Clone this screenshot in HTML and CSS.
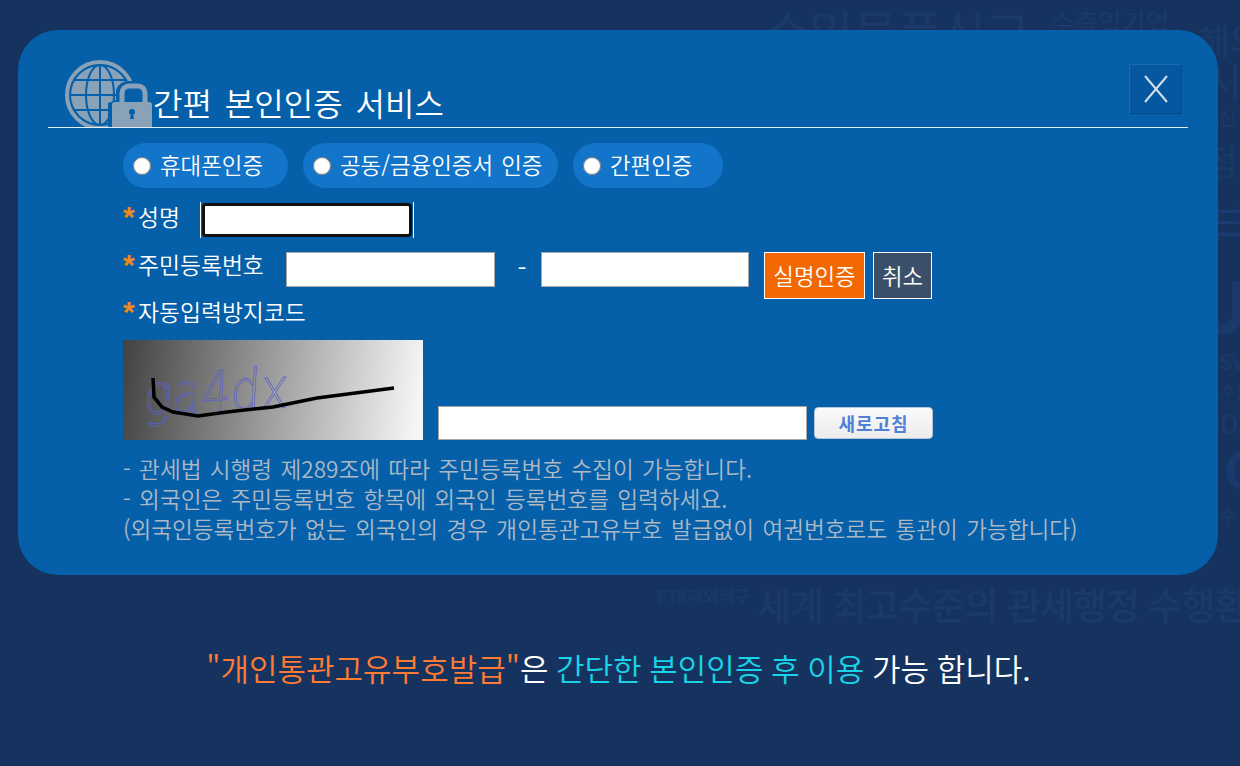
FILE: index.html
```html
<!DOCTYPE html>
<html lang="ko">
<head>
    <meta charset="UTF-8">
    <meta name="viewport" content="width=device-width, initial-scale=1.0">
    <title>간편 본인인증 서비스</title>
    <link rel="stylesheet" href="styles.css">
</head>
<body>
    <div class="ghost-layer" aria-hidden="true">
        <span class="ghost ghost-top">수입물품신고</span>
        <span class="ghost ghost-top-sm">수출입기업</span>
        <span class="ghost ghost-right1">해외</span>
        <span class="ghost ghost-right2">시</span>
        <span class="ghost ghost-right3">신</span>
        <span class="ghost ghost-right4">정</span>
        <span class="ghost ghost-right5">브</span>
        <span class="ghost ghost-right6">U</span>
        <span class="ghost ghost-right7">SV</span>
        <span class="ghost ghost-right8">수출</span>
        <span class="ghost ghost-right9">이</span>
        <span class="ghost ghost-right10">C</span>
        <span class="ghost ghost-right11">수</span>
        <span class="ghost ghost-fta">FTA해외직구</span>
        <span class="ghost ghost-world">세계 최고수준의 관세행정 수행환</span>
    </div>

    <div class="modal">
        <div class="modal-header">
            <svg class="header-icon" viewBox="0 0 89 67" width="89" height="67">
                <circle cx="36" cy="35" r="33" fill="none" stroke="#8aa2b8" stroke-width="4"/>
                <circle cx="36" cy="35" r="29" fill="#8aa2b8"/>
                <g fill="none" stroke="#0560a9" stroke-width="2">
                    <ellipse cx="36" cy="35" rx="14" ry="30"/>
                    <path d="M36 5V65M6 35H66M10 20H62M10 50H62"/>
                </g>
                <path d="M44 67V43l8-3V30a13 13 0 0 1 13-9h8a13 13 0 0 1 13 9v10l5 3v24z" fill="#0560a9"/>
                <path d="M58 43V33a7 7 0 0 1 7-7h9a7 7 0 0 1 7 7v10" fill="none" stroke="#8aa2b8" stroke-width="5"/>
                <path d="M48 45a3 3 0 0 1 3-3h34a3 3 0 0 1 3 3v22H48z" fill="#8aa2b8"/>
                <circle cx="68" cy="52" r="3" fill="#0560a9"/>
                <path d="M67 53h2l1 6h-4z" fill="#0560a9"/>
            </svg>
            <h1 class="modal-title">간편 본인인증 서비스</h1>
            <button class="close-btn" aria-label="닫기">
                <svg viewBox="0 0 24 28" width="24" height="28"><path d="M1 1L23 27M23 1L1 27" fill="none" stroke="#d5e0ea" stroke-width="2"/></svg>
            </button>
        </div>

        <div class="modal-body">
            <div class="auth-tabs">
                <label class="auth-tab tab-phone"><input type="radio" name="auth"> 휴대폰인증</label>
                <label class="auth-tab tab-cert"><input type="radio" name="auth"> 공동/금융인증서 인증</label>
                <label class="auth-tab tab-easy"><input type="radio" name="auth"> 간편인증</label>
            </div>

            <div class="form-row name-row">
                <div class="field-label"><span class="star">*</span>성명</div>
                <span class="name-wrap"><input class="text-input name-input" type="text"></span>
            </div>

            <div class="form-row rrn-row">
                <div class="field-label"><span class="star">*</span>주민등록번호</div>
                <input class="text-input rrn-input" type="text">
                <span class="rrn-dash">-</span>
                <input class="text-input rrn-input rrn-back" type="text">
                <button class="btn-confirm">실명인증</button>
                <button class="btn-cancel">취소</button>
            </div>

            <div class="field-label code-label"><span class="star">*</span>자동입력방지코드</div>

            <div class="captcha-row">
                <svg class="captcha" viewBox="0 0 300 100" width="300" height="100">
                    <defs>
                        <linearGradient id="captchaBg" gradientUnits="userSpaceOnUse" x1="0" y1="0" x2="300" y2="40">
                            <stop offset="0" stop-color="#424242"/>
                            <stop offset="1" stop-color="#f6f6f6"/>
                        </linearGradient>
                    </defs>
                    <rect width="300" height="100" fill="url(#captchaBg)"/>
                    <text class="captcha-text" transform="translate(20 75) rotate(-3) skewX(-6) scale(.84 1)">ga4dx</text>
                    <path d="M30 38L31 57L39 67L50 72L75 76L104 72L150 67L194 58L271 48" fill="none" stroke="#000" stroke-width="3.5"/>
                </svg>
                <input class="text-input captcha-input" type="text">
                <button class="btn-refresh">새로고침</button>
            </div>

            <div class="notes">
                <p>- 관세법 시행령 제289조에 따라 주민등록번호 수집이 가능합니다.</p>
                <p>- 외국인은 주민등록번호 항목에 외국인 등록번호를 입력하세요.</p>
                <p>(외국인등록번호가 없는 외국인의 경우 개인통관고유부호 발급없이 여권번호로도 통관이 가능합니다)</p>
            </div>
        </div>
    </div>

    <p class="bottom-msg"><span class="msg-orange">"개인통관고유부호발급"</span>은 <span class="msg-cyan">간단한 본인인증 후 이용</span> 가능 합니다.</p>
</body>
</html>
```

FILE: styles.css
```css
* {
    box-sizing: border-box;
}
html, body {
    height: 100%;
}
body {
    margin: 0;
    padding: 30px 22px 0 18px;
    background-color: #163360;
    color: white;
    font-family: "Noto Sans CJK KR", "Noto Sans", sans-serif;
    font-weight: 350;
    overflow: hidden;
    position: relative;
}
.ghost-layer {
    position: absolute;
    inset: 0;
    overflow: hidden;
}
.ghost {
    position: absolute;
    color: #1c3a68;
    white-space: nowrap;
    line-height: 1;
    font-weight: 400;
}
.ghost-top { left: 765px; top: 6px; font-size: 48px; }
.ghost-top-sm { left: 1050px; top: 9px; font-size: 26px; }
.ghost-right1 { left: 1197px; top: 21px; font-size: 36px; }
.ghost-right2 { left: 1205px; top: 60px; font-size: 40px; }
.ghost-right3 { left: 1219px; top: 108px; font-size: 18px; }
.ghost-right4 { left: 1205px; top: 142px; font-size: 36px; }
.ghost-right5 { left: 1208px; top: 194px; font-size: 46px; color: #1a3c71; }
.ghost-right6 { left: 1196px; top: 268px; font-size: 70px; font-weight: 700; color: #1b3a6c; }
.ghost-right7 { left: 1219px; top: 349px; font-size: 22px; }
.ghost-right8 { left: 1219px; top: 382px; font-size: 18px; }
.ghost-right9 { left: 1219px; top: 408px; font-size: 32px; }
.ghost-right10 { left: 1224px; top: 442px; font-size: 50px; font-weight: 700; color: #1b3a6c; }
.ghost-right11 { left: 1219px; top: 505px; font-size: 18px; }
.ghost-fta { left: 657px; top: 587px; font-size: 17px; font-weight: 700; color: #1b3966; }
.ghost-world { left: 757px; top: 586px; font-size: 37px; font-weight: 500; letter-spacing: -1px; color: #1c3a68; }

.modal {
    position: relative;
    height: 545px;
    background-color: #0560a9;
    border-radius: 40px;
    padding: 30px 30px 0;
}
.modal-header {
    display: flex;
    align-items: flex-end;
    height: 68px;
    padding-left: 16px;
    border-bottom: 1px solid #e4eef6;
}
.header-icon {
    display: block;
    flex: none;
}
.modal-title {
    margin: 0 0 2px;
    font-size: 32px;
    font-weight: 350;
    line-height: 46px;
    word-spacing: 4px;
}
.close-btn {
    margin-left: auto;
    margin-right: 6px;
    margin-bottom: 13px;
    width: 53px;
    height: 50px;
    padding: 0;
    display: flex;
    align-items: center;
    justify-content: center;
    background-color: #0557a0;
    border: 1px solid;
    border-color: #1a6cb2 #04498a #04498a #1a6cb2;
}
.modal-body {
    padding: 15px 0 0 75px;
}
.auth-tabs {
    display: flex;
    gap: 15px;
}
.auth-tab {
    display: flex;
    align-items: center;
    gap: 9px;
    height: 45px;
    padding-left: 10px;
    padding-bottom: 3px;
    border-radius: 23px;
    background-color: #1275ca;
    font-size: 22.4px;
    word-spacing: 2px;
}
.auth-tab input {
    width: 18px;
    height: 18px;
    margin: 3px 0 0;
}
.tab-phone { width: 165px; }
.tab-cert { width: 255px; }
.tab-easy { width: 150px; }
.form-row {
    display: flex;
}
.name-row {
    margin-top: 14px;
    align-items: flex-start;
}
.rrn-row {
    margin-top: 14px;
    align-items: flex-start;
}
.field-label {
    font-size: 22.8px;
    line-height: 30px;
    white-space: nowrap;
}
.star {
    display: inline-block;
    width: 15px;
    font-family: "Liberation Sans", sans-serif;
    font-size: 30px;
    font-weight: 700;
    line-height: 0;
    color: #ef8a1d;
    vertical-align: -1px;
}
.name-row .field-label {
    width: 77px;
}
.rrn-row .field-label {
    width: 163px;
    margin-top: -2px;
}
.name-wrap {
    display: block;
    height: 36px;
    padding: 1px;
    border-left: 1px solid #fff;
    border-right: 1px solid #fff;
}
.text-input {
    display: block;
    margin: 0;
    background: white;
    border: 1px solid #a5a5a5;
}
.name-input {
    width: 210px;
    height: 34px;
    border: 3px solid #111;
    border-radius: 4px;
}
.rrn-input {
    width: 209px;
    height: 35px;
}
.rrn-back {
    width: 208px;
}
.rrn-dash {
    width: 46px;
    padding-left: 8px;
    text-align: center;
    font-size: 26px;
    line-height: 30px;
}
.btn-confirm, .btn-cancel {
    height: 47px;
    padding: 0 0 2px;
    border: 1px solid white;
    color: white;
    font-family: inherit;
    font-size: 22.4px;
    font-weight: 350;
}
.btn-confirm {
    width: 101px;
    margin-left: 15px;
    background-color: #f26700;
}
.btn-cancel {
    width: 59px;
    margin-left: 8px;
    background-color: #3c4f68;
}
.code-label {
    margin-top: -2px;
}
.captcha-row {
    display: flex;
    align-items: flex-end;
    margin-top: 13px;
}
.captcha {
    display: block;
}
.captcha-text {
    font-family: "DejaVu Sans", sans-serif;
    font-size: 56px;
    fill: none;
    stroke: #5a62c8;
    stroke-width: 0.8;
}
.captcha-input {
    width: 369px;
    height: 34px;
    margin-left: 15px;
}
.btn-refresh {
    width: 119px;
    height: 32px;
    margin: 0 0 1px 7px;
    padding: 0;
    border: 1px solid #b8c4d0;
    border-radius: 4px;
    background: linear-gradient(#fbfbfb, #ececec);
    color: #4f7fd6;
    font-family: inherit;
    font-size: 18px;
    font-weight: 700;
    letter-spacing: 1px;
}
.notes {
    margin-top: 14px;
    color: #adb8c4;
    font-size: 22.6px;
    line-height: 30px;
    word-spacing: 2px;
}
.notes p {
    margin: 0;
}
.bottom-msg {
    position: relative;
    margin: 71px 0 0 1px;
    text-align: center;
    font-size: 31px;
    line-height: 44px;
    word-spacing: -1px;
}
.msg-orange {
    color: #ff7a33;
}
.msg-cyan {
    color: #19d3e8;
}
```
